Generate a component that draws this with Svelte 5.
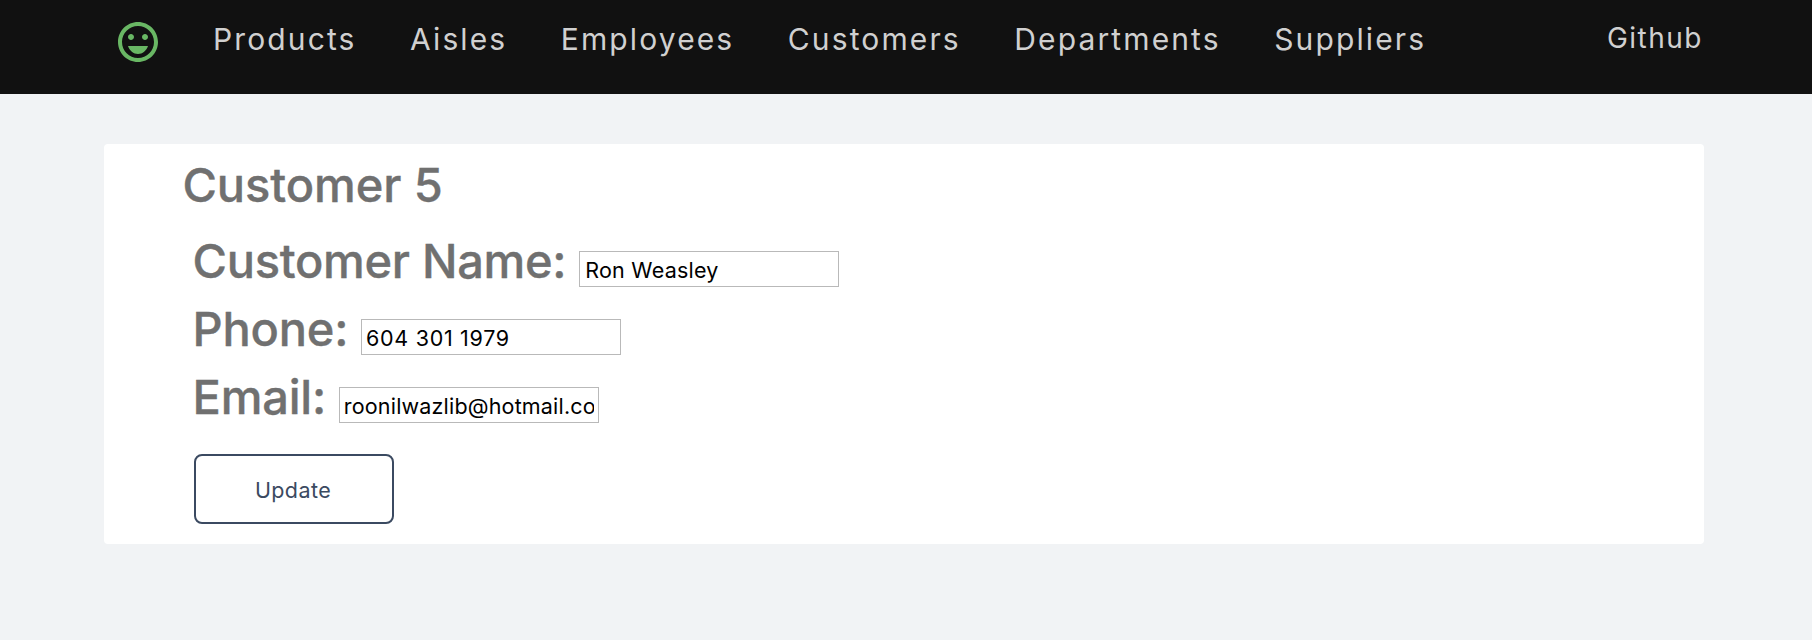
<script>
  const links = ['Products', 'Aisles', 'Employees', 'Customers', 'Departments', 'Suppliers'];
  let name = $state('Ron Weasley');
  let phone = $state('604 301 1979');
  let email = $state('roonilwazlib@hotmail.com');
</script>

<nav>
  <svg class="logo" viewBox="2 2 20 20" fill="#69b764" aria-hidden="true">
    <path d="M11.99 2C6.47 2 2 6.48 2 12s4.47 10 9.99 10C17.52 22 22 17.52 22 12S17.52 2 11.99 2zM12 20c-4.42 0-8-3.58-8-8s3.58-8 8-8 8 3.58 8 8-3.58 8-8 8zm3.5-9c.83 0 1.5-.67 1.5-1.5S16.33 8 15.5 8 14 8.67 14 9.5s.67 1.5 1.5 1.5zm-7 0c.83 0 1.5-.67 1.5-1.5S9.33 8 8.5 8 7 8.67 7 9.5 7.67 11 8.5 11zm3.5 7c2.28 0 4.22-1.66 5-4H7c.78 2.34 2.72 4 5 4z" />
  </svg>
  <div class="links">
    {#each links as link}
      <a href="#{link.toLowerCase()}">{link}</a>
    {/each}
  </div>
  <a class="github" href="#github">Github</a>
</nav>

<main>
  <h1>Customer 5</h1>
  <form onsubmit={(e) => e.preventDefault()}>
    <div class="row">
      <label class="name-label" for="name">Customer Name:</label>
      <input id="name" class="name" type="text" bind:value={name} />
    </div>
    <div class="row">
      <label for="phone">Phone:</label>
      <input id="phone" class="phone" type="text" bind:value={phone} />
    </div>
    <div class="row">
      <label for="email">Email:</label>
      <input id="email" class="email" type="text" bind:value={email} />
    </div>
    <button type="submit">Update</button>
  </form>
</main>

<style>
  :global(body) {
    margin: 0;
    background: #f1f3f5;
    font-family: Inter, sans-serif;
  }
  nav {
    display: flex;
    align-items: flex-start;
    box-sizing: border-box;
    height: 94px;
    padding: 21px 109px 0 118px;
    background: #111;
  }
  .logo {
    width: 40px;
    height: 40px;
    margin-top: 1px;
  }
  .links {
    display: flex;
    gap: 53.5px;
    margin-left: 55px;
  }
  a {
    color: #d0d0d0;
    font-size: 30px;
    line-height: 36px;
    letter-spacing: 2.12px;
    text-decoration: none;
  }
  .github {
    margin-left: auto;
    font-size: 28px;
    line-height: 34px;
    letter-spacing: 1.5px;
  }
  main {
    box-sizing: border-box;
    width: 1600px;
    height: 400px;
    margin: 50px 0 0 104px;
    padding: 11px 0 0 78.5px;
    border-radius: 4px;
    background: #fff;
  }
  h1,
  label {
    color: #707070;
    font-size: 47px;
    font-weight: 500;
    letter-spacing: -0.2px;
    -webkit-text-stroke: 0.35px #707070;
  }
  h1 {
    margin: 0;
    line-height: 60px;
    letter-spacing: -0.1px;
  }
  form {
    padding: 12px 0 0 10px;
  }
  .row {
    display: flex;
    align-items: baseline;
    gap: 12.8px;
    height: 68px;
    line-height: 68px;
  }
  .name-label {
    letter-spacing: -0.29px;
  }
  input {
    box-sizing: border-box;
    width: 260px;
    height: 36px;
    padding: 3px 4px 0;
    border: 1px solid #b9b9b9;
    border-radius: 0;
    outline: none;
    background: #fff;
    color: #000;
    font: 21.5px Inter, sans-serif;
  }
  .name {
    padding-left: 5px;
    letter-spacing: 0.25px;
  }
  .phone {
    letter-spacing: 0.7px;
  }
  .email {
    letter-spacing: 0.18px;
  }
  button {
    display: block;
    box-sizing: border-box;
    width: 200px;
    height: 70px;
    margin: 23px 0 0 1.5px;
    padding: 2px 2px 0 0;
    border: 2px solid #3b4a61;
    border-radius: 8px;
    background: #fff;
    color: #3b4a61;
    font: 21.5px Inter, sans-serif;
    letter-spacing: 0.4px;
  }
</style>
